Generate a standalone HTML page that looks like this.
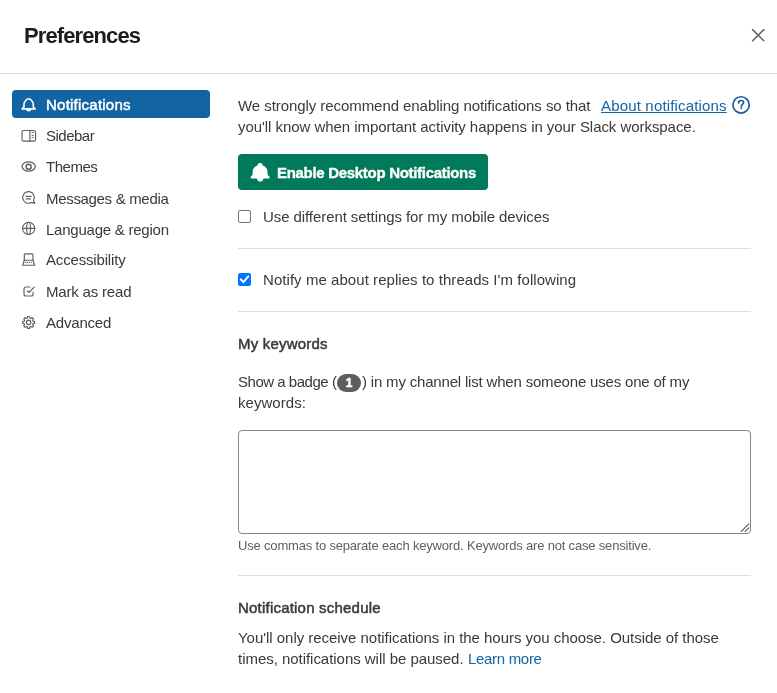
<!DOCTYPE html>
<html><head><meta charset="utf-8">
<style>
*{margin:0;padding:0;box-sizing:border-box}
html,body{width:777px;height:693px;overflow:hidden;background:#fff}
body{font-family:"Liberation Sans",sans-serif;color:#1d1c1d;position:relative}
.t{position:absolute;will-change:transform;white-space:nowrap;font-size:15px;line-height:20px;color:#3b3a3b}
.hr{position:absolute;height:1px;background:#dddddd}
.sel{position:absolute;left:12px;top:90px;width:198px;height:28px;border-radius:4px;background:#1264a3}
.ic{position:absolute}
.btn{position:absolute;left:238px;top:154px;width:250px;height:36px;background:#007a5a;border-radius:4px}
.link{color:#1264a3}
</style></head><body>
<div class="t" id="title" style="left:24px;top:20.5px;font-size:22px;line-height:30px;font-weight:bold;color:#1d1c1d;letter-spacing:-0.900px">Preferences</div>
<div class="hr" style="left:0;top:73px;width:777px"></div>

<div class="sel"></div>
<div class="t" id="n1" style="left:46px;top:95px;color:#fff;-webkit-text-stroke:0.5px #fff;letter-spacing:0.233px">Notifications</div>
<div class="t" id="n2" style="left:46px;top:126px;letter-spacing:-0.500px">Sidebar</div>
<div class="t" id="n3" style="left:46px;top:157px;letter-spacing:-0.480px">Themes</div>
<div class="t" id="n4" style="left:46px;top:189px;letter-spacing:-0.320px">Messages &amp; media</div>
<div class="t" id="n5" style="left:46px;top:220px;letter-spacing:-0.237px">Language &amp; region</div>
<div class="t" id="n6" style="left:46px;top:250px;letter-spacing:-0.167px">Accessibility</div>
<div class="t" id="n7" style="left:46px;top:282px;letter-spacing:-0.182px">Mark as read</div>
<div class="t" id="n8" style="left:46px;top:313px;letter-spacing:-0.200px">Advanced</div>

<div class="t" id="c1" style="left:238px;top:96px;letter-spacing:-0.063px">We strongly recommend enabling notifications so that</div>
<div class="t link" id="c1b" style="left:601.00px;top:96px;text-decoration:underline;letter-spacing:0.167px">About notifications</div>
<div class="t" id="c2" style="left:238px;top:117px;letter-spacing:-0.054px">you'll know when important activity happens in your Slack workspace.</div>

<div class="btn"></div>
<div class="t" id="bt" style="left:277.20px;top:163px;color:#fff;font-weight:bold;-webkit-text-stroke:0.35px #fff;letter-spacing:-0.304px">Enable Desktop Notifications</div>

<div class="ic" style="left:238px;top:210px;width:13px;height:13px;border:1px solid #767676;border-radius:2px"></div>
<div class="t" id="cb1" style="left:263px;top:207px;letter-spacing:-0.079px">Use different settings for my mobile devices</div>
<div class="hr" style="left:238px;top:248px;width:513px"></div>
<div class="ic" style="left:238px;top:273px;width:13px;height:13px;background:#0075ff;border-radius:2px"></div>
<div class="t" id="cb2" style="left:263px;top:270px;letter-spacing:0.055px">Notify me about replies to threads I'm following</div>
<div class="hr" style="left:238px;top:311px;width:513px"></div>

<div class="t" id="kw" style="left:238px;top:334px;-webkit-text-stroke:0.5px #3b3a3b;letter-spacing:0.200px">My keywords</div>
<div class="t" id="b1" style="left:238px;top:372px;letter-spacing:-0.477px">Show a badge (</div>
<div class="ic" style="left:337px;top:374px;width:24px;height:18px;border-radius:9px;background:#5e5d60"></div>
<div class="t" id="b2" style="left:362.40px;top:372px;letter-spacing:-0.183px">) in my channel list when someone uses one of my</div>
<div class="t" id="b3" style="left:238px;top:393px;letter-spacing:0.050px">keywords:</div>
<div class="ic" style="left:238px;top:430px;width:513px;height:104px;border:1px solid #868686;border-radius:4px"></div>
<div class="t" id="hint" style="left:238px;top:537px;font-size:13px;line-height:18px;color:#616061;letter-spacing:-0.180px">Use commas to separate each keyword. Keywords are not case sensitive.</div>
<div class="hr" style="left:238px;top:575px;width:513px"></div>
<div class="t" id="ns" style="left:238px;top:598px;-webkit-text-stroke:0.5px #3b3a3b;letter-spacing:0.210px">Notification schedule</div>
<div class="t" id="s1" style="left:238px;top:628px;letter-spacing:-0.035px">You'll only receive notifications in the hours you choose. Outside of those</div>
<div class="t" id="s2" style="left:238px;top:649px;letter-spacing:-0.035px">times, notifications will be paused.</div>
<div class="t link" id="lm" style="left:467.60px;top:649px;letter-spacing:-0.311px">Learn more</div>
<svg class="ic" style="left:0;top:0" width="777" height="693" viewBox="0 0 777 693">
<g fill="none" stroke-linecap="round" stroke-linejoin="round">
<path d="M27.7 99 L29.6 99 C30.6 99 31.1 99.8 31.6 100.6 L32.6 102 C33.1 102.7 33.3 103.5 33.3 104.3 L33.3 106.7 C33.3 107.6 35.2 108 35.2 108.9 L22.1 108.9 C22.1 108 24 107.6 24 106.7 L24 104.3 C24 103.5 24.2 102.7 24.7 102 L25.7 100.6 C26.2 99.8 26.7 99 27.7 99 Z M26.8 109.2 C26.9 111.3 30.4 111.3 30.5 109.2" stroke="#fff" stroke-width="1.6"/>
<g stroke="#616061" stroke-width="1.15">
<rect x="22" y="130.5" width="13.6" height="10.6" rx="1.6"/>
<path d="M29.9 130.5 L29.9 141.1"/>
<path d="M32 132.5 L33.6 132.5 M32 135.3 L33.6 135.3 M32 137.4 L33.6 137.4" stroke-width="0.9"/>
<path d="M21.9 166.5 C23.5 160.3 33.8 160.3 35.4 166.5 C33.8 172.7 23.5 172.7 21.9 166.5 Z"/>
<circle cx="28.6" cy="166.7" r="2.5" stroke-width="1.5"/>
<path d="M33.52 200.3 A5.8 5.8 0 1 0 31.4 202.42 L34.8 203.4 Z"/>
<path d="M26.1 196.3 L31.3 196.3 M26.1 198.9 L30.5 198.9"/>
<circle cx="28.65" cy="228.4" r="6.1"/>
<path d="M22.6 228.4 L34.7 228.4"/>
<ellipse cx="28.6" cy="228.4" rx="1.9" ry="6.1"/>
<path d="M24.3 260.2 L24.3 254.8 Q24.3 253.8 25.3 253.8 L32 253.8 Q33 253.8 33 254.8 L33 260.2 Z"/>
<path d="M24.3 260.2 L22.6 265.2 L34.7 265.2 L33 260.2"/>
<path d="M25.6 262.4 L25.7 262.4 M27.4 262.4 L27.5 262.4 M29.3 262.4 L29.4 262.4 M31.2 262.4 L31.3 262.4" stroke-width="1.2"/>
<path d="M29.9 287 L26 287 Q24 287 24 289 L24 294 Q24 296 26 296 L31.1 296 Q33.1 296 33.1 294 L33.1 292"/>
<path d="M27.3 290.8 L28.9 292.5 L34.2 287.1"/>
<path d="M27.32 318.10 L27.63 316.49 L29.67 316.49 L29.98 318.10 L30.75 318.42 L32.11 317.50 L33.55 318.94 L32.63 320.30 L32.95 321.07 L34.56 321.38 L34.56 323.42 L32.95 323.73 L32.63 324.50 L33.55 325.86 L32.11 327.30 L30.75 326.38 L29.98 326.70 L29.67 328.31 L27.63 328.31 L27.32 326.70 L26.55 326.38 L25.19 327.30 L23.75 325.86 L24.67 324.50 L24.35 323.73 L22.74 323.42 L22.74 321.38 L24.35 321.07 L24.67 320.30 L23.75 318.94 L25.19 317.50 L26.55 318.42 Z"/>
<circle cx="28.65" cy="322.4" r="2.2"/>
</g>
<path d="M752.6 29.6 L763.8 40.8 M763.8 29.6 L752.6 40.8" stroke="#616061" stroke-width="1.5"/>
<circle cx="741.1" cy="104.9" r="8.15" stroke="#1d5a9b" stroke-width="1.7"/>
<path d="M738.6 102.9 C738.6 101.2 739.8 100.5 741.1 100.5 C742.6 100.5 743.6 101.4 743.6 102.6 C743.6 104.3 741.3 104.4 741.3 106.2" stroke="#1d5a9b" stroke-width="1.7"/>
<circle cx="741.3" cy="108.3" r="1" fill="#1d5a9b"/>
<path d="M240.8 279.4 L243.4 282.1 L248.3 276.4" stroke="#fff" stroke-width="2"/>
<path d="M741.3 531.4 L748.8 523.9 M745.2 531.4 L748.8 527.8" stroke="#555" stroke-width="1.1"/>
</g>
<g fill="#fff">
<path d="M260.1 164.9 C255.6 165.3 252.9 167.9 252.7 171.4 L252.6 174.6 C252.4 175.6 250.8 176.2 250.6 177.1 C250.5 178.1 251 178.6 251.8 178.6 L268.4 178.6 C269.2 178.6 269.7 178.1 269.6 177.1 C269.4 176.2 267.8 175.6 267.6 174.6 L267.5 171.4 C267.3 167.9 264.6 165.3 260.1 164.9 Z"/>
<circle cx="260.1" cy="165.6" r="2.6"/>
<path d="M256.9 177.6 L256.9 178.2 C256.9 182.7 263.4 182.7 263.4 178.2 L263.4 177.6 Z"/>
</g>
</svg>
<div class="t" id="bn" style="left:337px;top:373px;width:24px;text-align:center;font-size:12px;line-height:20px;font-weight:bold;color:#fff;-webkit-text-stroke:0.5px #fff">1</div>
</body></html>
